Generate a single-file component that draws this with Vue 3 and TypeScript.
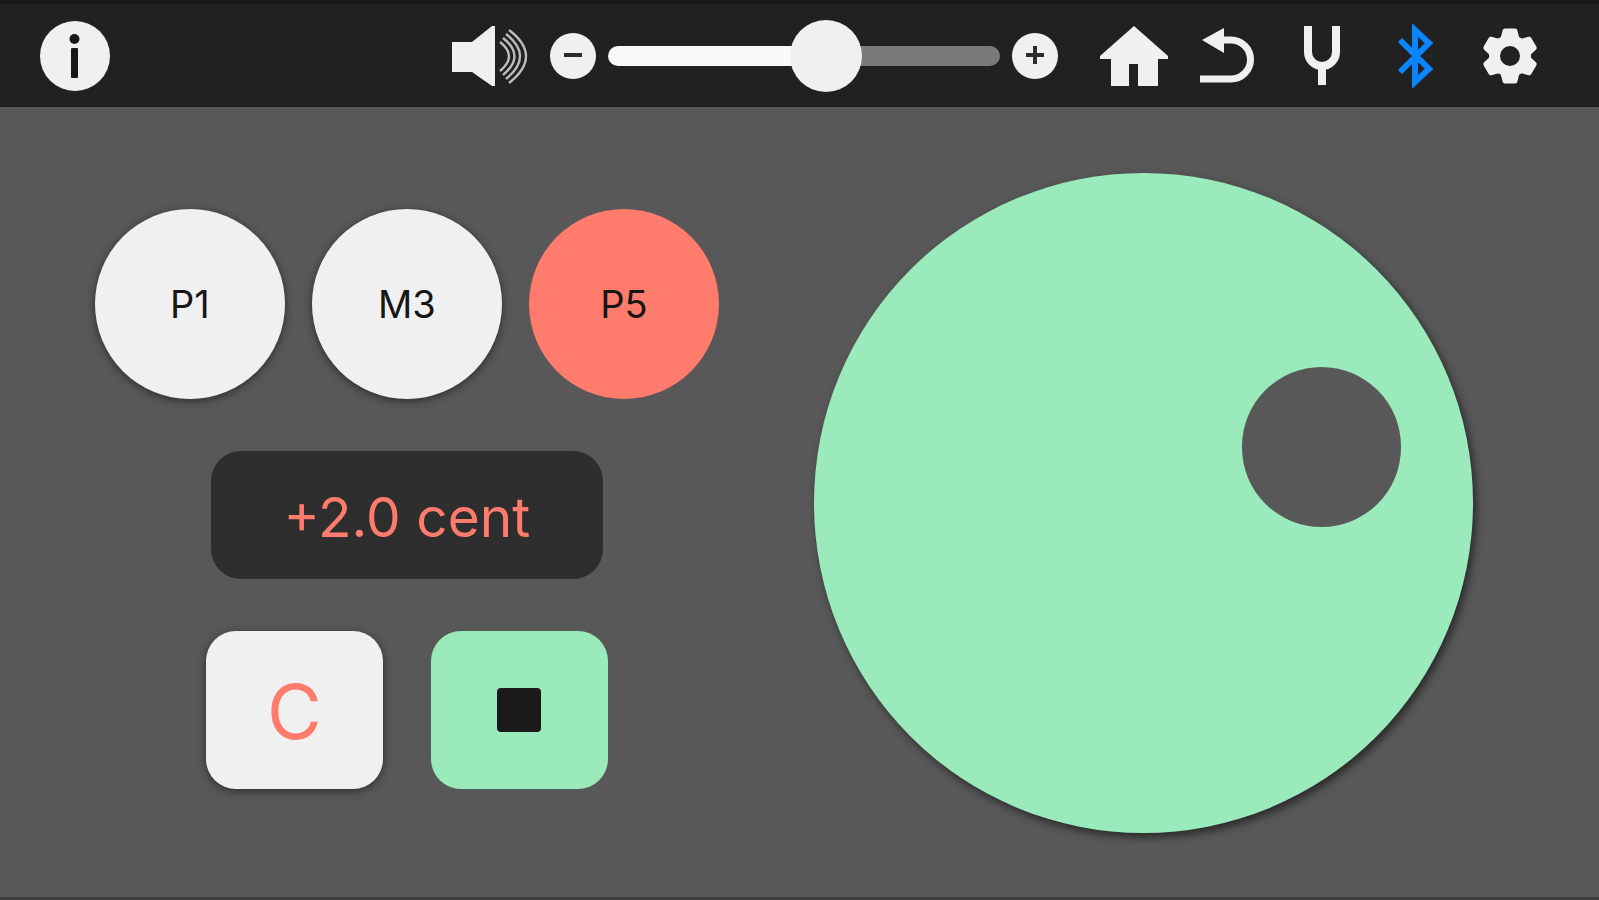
<script setup lang="ts">
import { computed, ref } from 'vue'

interface Interval {
  id: string
  label: string
}

const intervals: Interval[] = [
  { id: 'root', label: 'P1' },
  { id: 'third', label: 'M3' },
  { id: 'fifth', label: 'P5' },
]

const selected = ref('fifth')
const volume = ref(57)
const note = ref('C')
const offset = ref('+2.0 cent')
const fill = computed(() => ({ '--fill': `${volume.value}%` }))

function nudge(step: number) {
  volume.value = Math.min(100, Math.max(0, volume.value + step))
}
</script>

<template>
  <div class="app">
    <header class="bar">
      <button class="round info" type="button" aria-label="Information">
        <svg width="70" height="70" viewBox="0 0 70 70">
          <circle cx="34.5" cy="18" r="5" />
          <rect x="31" y="27" width="7" height="30" rx="1" />
        </svg>
      </button>

      <div class="volume">
        <svg class="speaker" width="76" height="60" viewBox="0 0 76 60" aria-hidden="true">
          <path d="M0 16H20L40 0H43V60H40L20 46H0Z" fill="#f0f0f0" />
          <g fill="none" stroke="#bdbdbd" stroke-width="2.4">
            <path d="M48 16Q66 30 48 45" />
            <path d="M51 12Q74 30 51 49" />
            <path d="M54 8Q82 30 54 53" />
            <path d="M57 4Q91 30 57 57" />
          </g>
        </svg>
        <button class="round small" type="button" aria-label="Volume down" @click="nudge(-5)">
          <svg width="46" height="46" viewBox="0 0 46 46"><path d="M14 22H32" /></svg>
        </button>
        <input
          v-model.number="volume"
          class="slider"
          type="range"
          min="0"
          max="100"
          aria-label="Volume"
          :style="fill"
        />
        <button class="round small" type="button" aria-label="Volume up" @click="nudge(5)">
          <svg width="46" height="46" viewBox="0 0 46 46"><path d="M14 22H32M23 13V31" /></svg>
        </button>
      </div>

      <nav class="tools" aria-label="Tools">
        <button class="tool" type="button" aria-label="Home">
          <svg width="68" height="60" viewBox="0 0 68 60">
            <path d="M34 0L68 30V33H58V60H38V38H29V60H11V33H0V30Z" fill="#f0f0f0" />
          </svg>
        </button>
        <button class="tool" type="button" aria-label="Back">
          <svg width="56" height="56" viewBox="0 0 56 56">
            <path d="M2 12L24 0V25Z" fill="#f0f0f0" />
            <path d="M22 12H31A19.5 19.5 0 0 1 31 51H-1" fill="none" stroke="#f0f0f0" stroke-width="7" />
          </svg>
        </button>
        <button class="tool" type="button" aria-label="Tuning fork">
          <svg width="36" height="60" viewBox="0 0 36 60">
            <path d="M4 0V26A14 14 0 0 0 32 26V0M18 40V59" fill="none" stroke="#f0f0f0" stroke-width="8" />
          </svg>
        </button>
        <button class="tool" type="button" aria-label="Bluetooth">
          <svg width="38" height="64" viewBox="0 0 38 64">
            <path
              d="M3 16L32 45L18 58V6L32 19L3 48"
              fill="none"
              stroke="#0a84ff"
              stroke-width="6"
            />
          </svg>
        </button>
        <button class="tool" type="button" aria-label="Settings">
          <svg width="56" height="56" viewBox="-28 -28 56 56">
            <circle r="15.5" fill="none" stroke="#f0f0f0" stroke-width="11" />
            <path
              v-for="n in 6"
              :key="n"
              d="M-7 -17L-5 -25H5L7 -17Z"
              :transform="`rotate(${n * 60})`"
              fill="#f0f0f0"
              stroke="#f0f0f0"
              stroke-width="5"
              stroke-linejoin="round"
            />
          </svg>
        </button>
      </nav>
    </header>

    <main class="stage">
      <section class="panel" aria-label="Interval">
        <div class="intervals">
          <button
            v-for="item in intervals"
            :key="item.id"
            type="button"
            class="interval"
            :class="{ active: item.id === selected }"
            :aria-pressed="item.id === selected"
            @click="selected = item.id"
          >
            {{ item.label }}
          </button>
        </div>
        <output class="cents">{{ offset }}</output>
        <div class="actions">
          <button class="key note" type="button">{{ note }}</button>
          <button class="key stop" type="button" aria-label="Stop">
            <span class="square"></span>
          </button>
        </div>
      </section>

      <section class="wheel-area" aria-label="Pitch wheel">
        <div class="wheel">
          <button class="grip" type="button" aria-label="Turn wheel"></button>
        </div>
      </section>
    </main>
  </div>
</template>

<style>
body {
  margin: 0;
  background: #585858;
}
</style>

<style scoped>
* {
  box-sizing: border-box;
}

.app {
  display: flex;
  flex-direction: column;
  min-height: 100vh;
  background: #585858;
  border-bottom: 3px solid #3c3a3b;
  font-family: Inter, "Liberation Sans", sans-serif;
}

button {
  padding: 0;
  border: 0;
  font: inherit;
  cursor: pointer;
}

svg {
  display: block;
  flex: none;
}

.bar {
  display: flex;
  align-items: center;
  justify-content: flex-end;
  height: 107px;
  padding: 0 55px 0 40px;
  border-top: 4px solid #181818;
  background: #212121;
}

.round {
  flex: none;
  border-radius: 50%;
  background: #f0f0f0;
}

.info {
  width: 70px;
  height: 70px;
  margin-right: auto;
  fill: #181818;
}

.small {
  width: 46px;
  height: 46px;
  fill: none;
  stroke: #2c2c2c;
  stroke-width: 4px;
}

.volume {
  display: flex;
  flex: 0 1 606px;
  align-items: center;
  gap: 12px;
  min-width: 0;
  margin-right: 42px;
}

.speaker {
  margin-right: 10px;
}

.slider {
  flex: 1;
  min-width: 0;
  height: 72px;
  margin: 0;
  appearance: none;
  background: transparent;
  cursor: pointer;
}

.slider::-webkit-slider-runnable-track {
  height: 20px;
  border-radius: 10px;
  background: linear-gradient(to right, #fafafa var(--fill), #7a7a7a var(--fill));
}

.slider::-webkit-slider-thumb {
  width: 72px;
  height: 72px;
  margin-top: -26px;
  appearance: none;
  border-radius: 50%;
  background: #f0f0f0;
}

.tools {
  display: flex;
  gap: 26px;
}

.tool {
  display: flex;
  align-items: center;
  justify-content: center;
  width: 68px;
  height: 68px;
  background: transparent;
}

.stage {
  display: grid;
  flex: 1;
  grid-template-columns: 57fr 55fr;
  align-items: center;
  padding-top: 2px;
}

.panel {
  display: flex;
  flex-direction: column;
  align-items: center;
  gap: 52px;
  padding-bottom: 8px;
}

.intervals {
  display: flex;
  gap: 27px;
}

.interval {
  width: 190px;
  height: 190px;
  border-radius: 50%;
  background: #f0f0f0;
  box-shadow: 0 2px 8px rgba(0, 0, 0, 0.5);
  color: #161616;
  font-size: 38px;
}

.interval.active {
  background: #ff7b6b;
  box-shadow: none;
}

.cents {
  display: flex;
  align-items: center;
  justify-content: center;
  width: 392px;
  height: 128px;
  padding-top: 4px;
  border-radius: 30px;
  background: #2e2e2e;
  color: #ff7b6b;
  font-size: 55px;
}

.actions {
  display: flex;
  gap: 48px;
}

.key {
  display: flex;
  align-items: center;
  justify-content: center;
  width: 177px;
  height: 158px;
  border-radius: 30px;
}

.note {
  padding-top: 2px;
  background: #f0f0f0;
  box-shadow: 0 2px 8px rgba(0, 0, 0, 0.5);
  color: #ff7b6b;
  font-size: 75px;
}

.stop {
  background: #9aeabc;
}

.square {
  width: 44px;
  height: 44px;
  border-radius: 4px;
  background: #1a1818;
}

.wheel {
  position: relative;
  width: 84%;
  aspect-ratio: 1;
  border-radius: 50%;
  background: #9aeabc;
  box-shadow: 3px 4px 9px rgba(0, 0, 0, 0.55);
}

.grip {
  position: absolute;
  top: 29.4%;
  left: 64.9%;
  width: 24.2%;
  height: 24.2%;
  border-radius: 50%;
  background: #585858;
}
</style>
